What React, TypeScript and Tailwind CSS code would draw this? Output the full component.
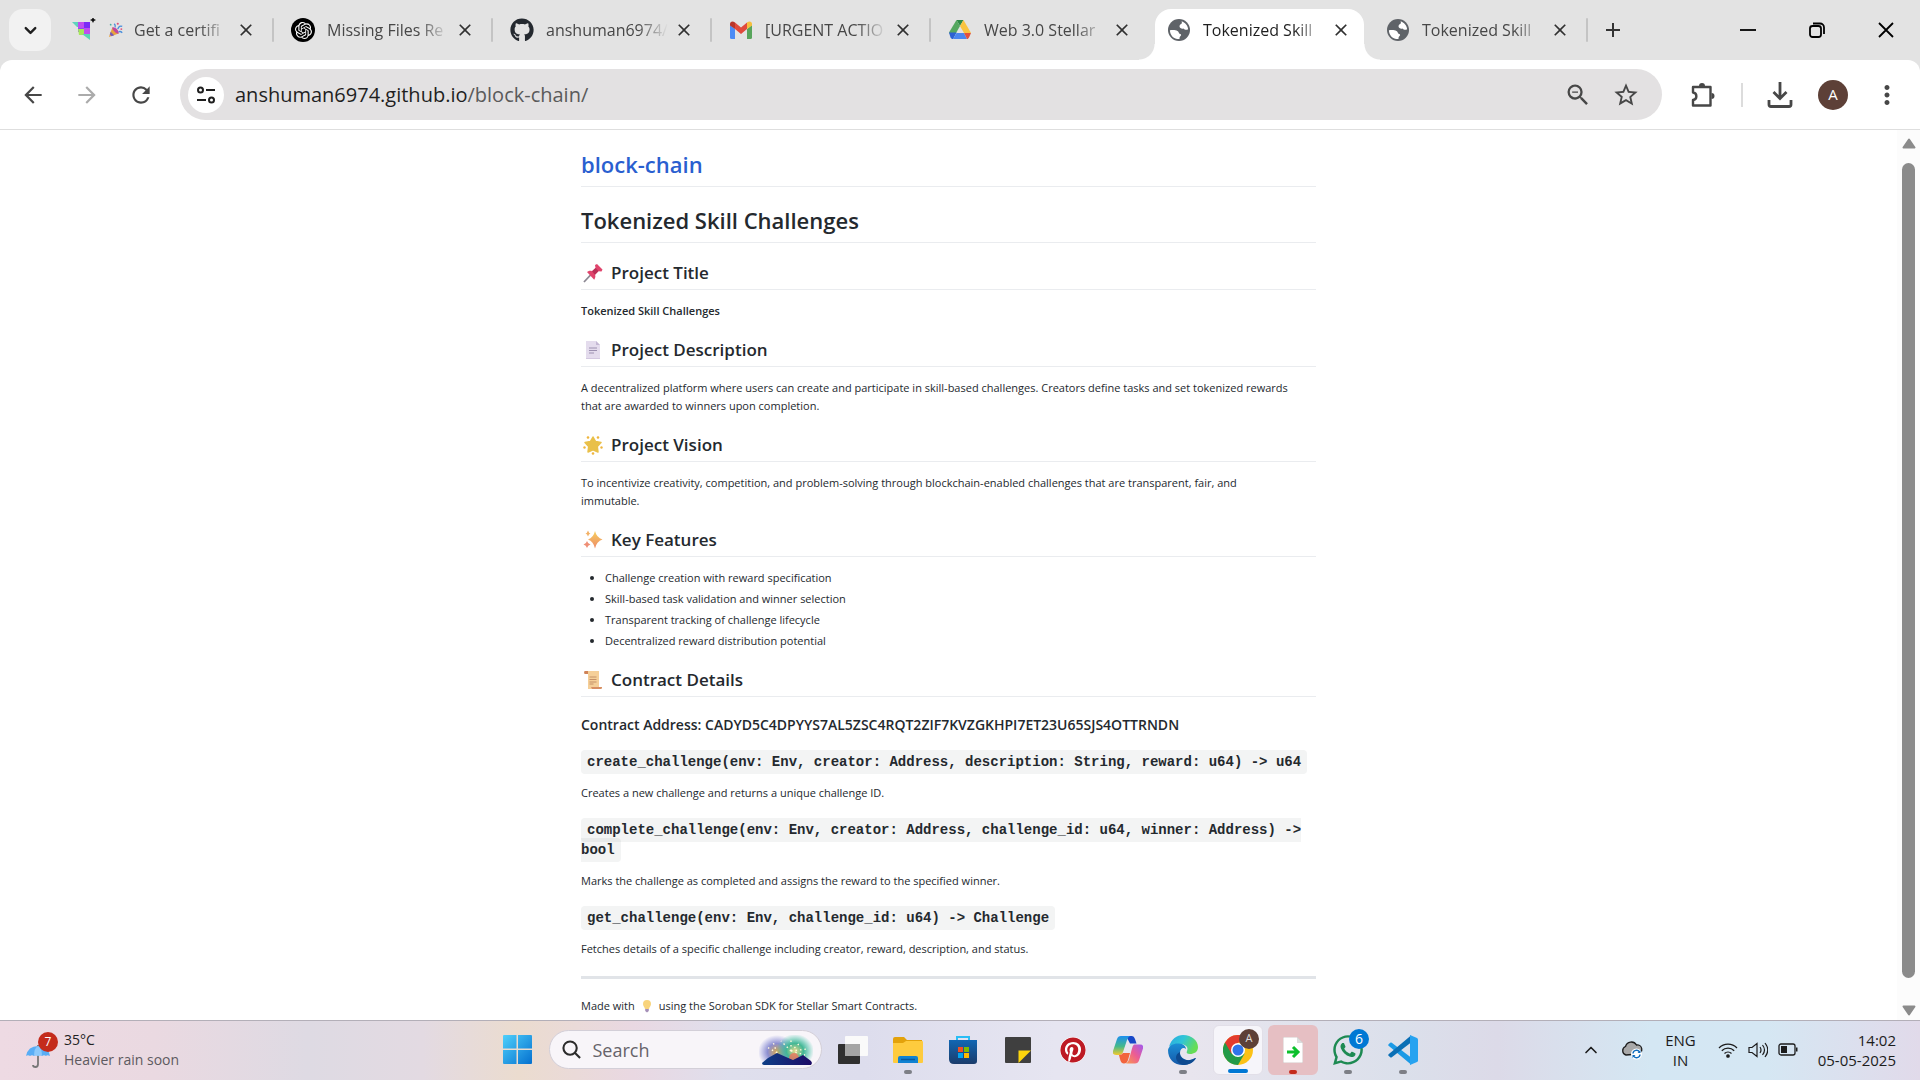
import React from "react";
import { FaGithub, FaWhatsapp, FaPinterest } from "react-icons/fa";
import { SiOpenai } from "react-icons/si";
import {
  MdArrowBack,
  MdArrowForward,
  MdRefresh,
  MdStarBorder,
  MdOutlineZoomOut,
  MdMoreVert,
  MdClose,
  MdAdd,
} from "react-icons/md";
import { ChevronDown, ChevronUp } from "lucide-react";

/* ---------- Tab favicons ---------- */

const CourseIcon = () => (
  <svg viewBox="0 0 24 24" className="size-6">
    <path d="M0 4h6v5H5z" fill="#5fd3bc" />
    <path d="M6 4h6v6H6z" fill="#c04df0" />
    <path d="M12 4h6v6h-6z" fill="#7a2cf5" />
    <path d="M6 10h6v4H6z" fill="#8e4ff2" />
    <path d="M6 11h6v6H7z" fill="#a6e85a" />
    <path d="M12 10h6v6h-6z" fill="#c04df0" />
    <path d="M10 16h8v6z" fill="#58d8b4" />
    <path d="M21-1l1 2 2 1-2 1-1 2-1-2-2-1 2-1z" fill="#111" />
  </svg>
);

const PartyIcon = () => (
  <svg viewBox="0 0 18 18" className="size-4 shrink-0">
    <path d="M1 17L5 6l7 7z" fill="#e8a33c" />
    <path d="M3 11l4 4-3 1-2-2z" fill="#7a5bb5" />
    <path d="M5 6c3-1 8 4 7 7-2 1-8-4-7-7z" fill="#c0479c" />
    <path d="M8 6c1-2 0-3-1-4M11 8c1-3 3-4 5-3M12 11c2-1 3 0 4 1" stroke="#4b8fdc" strokeWidth="1.6" fill="none" />
    <circle cx="11" cy="2" r="1.2" fill="#e0517a" />
    <circle cx="15" cy="8" r="1.1" fill="#e0517a" />
    <circle cx="3" cy="3" r="1" fill="#49b0a0" />
  </svg>
);

const OpenAiIcon = () => (
  <span className="flex size-6 items-center justify-center rounded-full bg-black text-white">
    <SiOpenai size={17} />
  </span>
);

const GmailIcon = () => (
  <svg viewBox="0 0 24 24" className="size-6">
    <path d="M1 7l5 4v10H2.500a1.500 1.500 0 0 1-1.500-1.500z" fill="#4c8bf5" />
    <path d="M18 11l5-4v12.500a1.500 1.500 0 0 1-1.500 1.500H18z" fill="#58a55c" />
    <path d="M6 4.500l6 5 6-5V11l-6 5-6-5z" fill="#e04a3c" />
    <path d="M1 6c0-2.500 2.500-3.500 5-1.500V11L1 7.500z" fill="#b8352b" />
    <path d="M23 6c0-2.500-2.500-3.500-5-1.500V11l5-3.500z" fill="#f6bf3e" />
  </svg>
);

const DriveIcon = () => (
  <svg viewBox="0 0 24 24" className="size-6">
    <path d="M8.500 2h7L12 8z" fill="#2f8a46" />
    <path d="M8.500 2L12 8 5 20.500 1 14.500z" fill="#55a860" />
    <path d="M15.500 2L23 15h-7L12 8z" fill="#f9c440" />
    <path d="M1 14.500h7.500L5 21c-1.500 0-2-.7-2.500-1.500z" fill="#2c61d4" />
    <path d="M8.500 15H16l3 6H5z" fill="#4a86f0" />
    <path d="M16 15h7l-2 4.500c-.5.900-1 1.500-2 1.500z" fill="#e2513e" />
  </svg>
);

const GlobeIcon = () => (
  <svg viewBox="0 0 24 24" className="size-6">
    <circle cx="12" cy="12" r="11" fill="#5f6368" />
    <path d="M14.500 3.300c3.500 1 6.300 4.200 6.600 8-1.600.9-3.600.6-4.600-.8-1.500.6-4-.2-4-2.300 0-1.300 1-1.700 1.700-2.200.8-.6.900-1.700.3-2.700z" fill="#fff" />
    <path d="M2.900 12.200c2.500-.2 5.700-.4 7.600.7 1.700 1 1 2.800 2.600 3 1.400.2 1.200 1.500.4 2.200-.9.800-1 1.800-1 3C7 21.300 3 17.500 2.900 12.200z" fill="#fff" />
  </svg>
);

type TabInfo = { icon: React.ReactNode; title: string; lead?: React.ReactNode; active?: boolean; sep?: boolean };

const tabs: TabInfo[] = [
  { icon: <CourseIcon />, title: "Get a certifi", lead: <PartyIcon />, sep: true },
  { icon: <OpenAiIcon />, title: "Missing Files Re", sep: true },
  { icon: <FaGithub size={24} className="text-[#24292f]" />, title: "anshuman6974/", sep: true },
  { icon: <GmailIcon />, title: "[URGENT ACTIO", sep: true },
  { icon: <DriveIcon />, title: "Web 3.0 Stellar" },
  { icon: <GlobeIcon />, title: "Tokenized Skill", active: true },
  { icon: <GlobeIcon />, title: "Tokenized Skill", sep: true },
];

function Tab({ icon, title, lead, active, sep }: TabInfo) {
  return (
    <div className="relative flex h-full w-[219px] min-w-0 items-center pr-4 pl-[17px]">
      {active && (
        <div className="absolute inset-x-[5px] top-[9px] bottom-0 rounded-t-2xl bg-white">
          <span className="absolute bottom-0 -left-4 size-4 bg-[radial-gradient(circle_at_top_left,#e3e3e3_15px,#ffffff_16px)]" />
          <span className="absolute -right-4 bottom-0 size-4 bg-[radial-gradient(circle_at_top_right,#e3e3e3_15px,#ffffff_16px)]" />
        </div>
      )}
      <span className="relative flex size-6 shrink-0 items-center justify-center">{icon}</span>
      <span
        className={
          "relative ml-3 flex min-w-0 flex-1 items-center gap-2.5 text-base whitespace-nowrap [mask-image:linear-gradient(to_right,black_75%,transparent)] " +
          (active ? "text-[#1f1f1f]" : "text-[#474747]")
        }
      >
        {lead}
        {title}
      </span>
      <button aria-label="Close tab" className="relative ml-1 flex size-6 shrink-0 items-center justify-center text-[#303030]">
        <MdClose size={20} />
      </button>
      {sep && <span className="absolute right-0 h-6 w-0.5 rounded-full bg-[#c4c4c4]" />}
    </div>
  );
}

function TabStrip() {
  return (
    <header className="flex h-[60px] shrink-0 items-center bg-[#e3e3e3]">
      <button aria-label="Search tabs" className="mr-1 ml-[9px] flex size-[42px] shrink-0 items-center justify-center rounded-[14px] bg-[#f2f2f2] text-[#1f1f1f]">
        <ChevronDown size={19} strokeWidth={3} />
      </button>
      <nav className="flex h-full min-w-0">
        {tabs.map((t, i) => (
          <Tab key={i} {...t} />
        ))}
      </nav>
      <button aria-label="New tab" className="ml-[11px] flex size-7 items-center justify-center text-[#333]">
        <MdAdd size={24} />
      </button>
      <div className="ml-auto flex text-black">
        <button aria-label="Minimize" className="flex h-10 w-[69px] items-center justify-center">
          <svg viewBox="0 0 16 16" className="size-4"><path d="M0 8h16" stroke="currentColor" strokeWidth="1.800" /></svg>
        </button>
        <button aria-label="Restore" className="flex h-10 w-[69px] items-center justify-center">
          <svg viewBox="0 0 16 16" className="size-4" fill="none" stroke="currentColor" strokeWidth="1.800">
            <rect x="1" y="4" width="11" height="11" rx="2.500" />
            <path d="M4 1.500h7a4 4 0 0 1 4 4v6.500" />
          </svg>
        </button>
        <button aria-label="Close" className="flex h-10 w-[69px] items-center justify-center">
          <svg viewBox="0 0 16 16" className="size-4"><path d="M1 1l14 14M15 1L1 15" stroke="currentColor" strokeWidth="1.800" /></svg>
        </button>
      </div>
    </header>
  );
}

function Toolbar() {
  return (
    <div className="shrink-0 bg-[#e3e3e3]">
      <div className="flex h-[70px] items-center rounded-t-xl border-b border-[#dedede] bg-white text-[#474747]">
        <div className="flex w-[180px] shrink-0 items-center pl-5">
          <button aria-label="Back" className="mr-7"><MdArrowBack size={26} /></button>
          <button aria-label="Forward" className="mr-7 text-[#ababab]"><MdArrowForward size={26} /></button>
          <button aria-label="Reload"><MdRefresh size={26} /></button>
        </div>
        <div className="flex h-[51px] min-w-0 flex-1 items-center rounded-full bg-[#e3e1e2] pr-[22px] pl-2">
          <button aria-label="View site information" className="flex size-9 shrink-0 items-center justify-center rounded-full bg-white text-[#1f1f1f]">
            <svg viewBox="0 0 20 20" className="size-5" fill="none" stroke="currentColor" strokeWidth="2">
              <circle cx="4.500" cy="5" r="2.500" />
              <path d="M10 5h9M1 15h9" />
              <circle cx="15.500" cy="15" r="2.500" />
            </svg>
          </button>
          <p className="ml-[11px] flex-1 text-xl whitespace-nowrap text-[#5a5a5a]">
            <span className="text-[#1f1f1f]">anshuman6974.github.io</span>/block-chain/
          </p>
          <button aria-label="Zoom"><MdOutlineZoomOut size={28} /></button>
          <button aria-label="Bookmark this tab" className="ml-5"><MdStarBorder size={28} /></button>
        </div>
        <div className="flex w-[258px] shrink-0 items-center pl-[27px]">
          <button aria-label="Extensions">
            <svg viewBox="0 0 28 28" className="size-7" fill="none" stroke="currentColor" strokeWidth="2.400" strokeLinejoin="round">
              <path d="M4 6h17.500v18.500H4v-5.500c4.500-.5 4.500-7 0-7.500z" />
              <path d="M10 5a3 3 0 0 1 6 0zM22.500 12a3 3 0 0 1 0 6z" fill="currentColor" stroke="none" />
            </svg>
          </button>
          <span className="ml-6 h-6 w-0.5 bg-[#dcdcdc]" />
          <button aria-label="Downloads" className="ml-6">
            <svg viewBox="0 0 26 28" className="h-7 w-[26px]" fill="none" stroke="currentColor" strokeWidth="2.800">
              <path d="M13 1v16M6.500 11l6.500 6.500 6.500-6.500M2 19v4.500a2 2 0 0 0 2 2h18a2 2 0 0 0 2-2V19" />
            </svg>
          </button>
          <button aria-label="Profile" className="ml-[25px] flex size-[30px] items-center justify-center rounded-full bg-[#5d4037] text-[15px] text-white">A</button>
          <button aria-label="Menu" className="ml-6"><MdMoreVert size={30} /></button>
        </div>
      </div>
    </div>
  );
}

/* ---------- Page heading pictograms ---------- */

const PinIcon = () => (
  <svg viewBox="0 0 20 20" className="size-5">
    <path d="M1 19L8 11.500" stroke="#8b8792" strokeWidth="1.800" />
    <path d="M4 9c2-1.500 4-1.500 5-.8L12.500 5 12 2l2-1 5.500 5.500-1 2-3-.3-3.500 3.500c.7 1.300.5 3-.8 5z" fill="#e0446c" />
    <path d="M9 8.200L12.500 5l3 3-3.500 3.700z" fill="#b92f56" />
  </svg>
);
const PageIcon = () => (
  <svg viewBox="0 0 20 20" className="size-5">
    <path d="M3 1h10l4 4v14H3z" fill="#e4dced" />
    <path d="M13 1l4 4h-4z" fill="#c4b8d4" />
    <path d="M6 8h8M6 10.500h8M6 13h5" stroke="#9c90b0" strokeWidth="1" />
    <path d="M3 18h14v1H3z" fill="#d3c8e0" />
  </svg>
);
const StarIcon = () => (
  <svg viewBox="0 0 20 20" className="size-5">
    <path d="M10 2l2.600 4.600 5.400 1-3.700 4 .7 5.400-5-2.300L5 17l.7-5.400-3.700-4 5.400-1z" fill="#e9c04a" stroke="#e9c04a" strokeWidth="1.500" strokeLinejoin="round" />
    <g fill="#efb53c">
      <circle cx="5" cy="2.500" r="1.300" /><circle cx="15" cy="2.500" r="1.300" /><circle cx="1.500" cy="12.500" r="1.200" />
      <circle cx="18.500" cy="12.500" r="1.200" /><circle cx="10" cy="18.500" r="1.300" />
    </g>
  </svg>
);
const SparkleIcon = () => (
  <svg viewBox="0 0 20 20" className="size-5">
    <defs>
      <linearGradient id="spark" x1="0" y1="0" x2="0" y2="1"><stop offset="0" stopColor="#f6cf5c" /><stop offset="1" stopColor="#ee8a6a" /></linearGradient>
    </defs>
    <path d="M12 1q1.500 6.500 7.500 8.500Q13.500 11.500 12 18.500 10.500 11.500 5 9.500 10.500 7.500 12 1z" fill="url(#spark)" />
    <path d="M5 .500q.7 2.500 2.500 3Q5.700 4 5 6.500 4.300 4 2.500 3.500 4.300 3 5 .5z" fill="#f3b166" />
    <path d="M4 11q.8 3 3.500 3.500Q4.800 15 4 18 3.200 15 .5 14.500 3.200 14 4 11z" fill="#ef8f76" />
  </svg>
);
const ScrollIcon = () => (
  <svg viewBox="0 0 20 20" className="size-5">
    <path d="M4 1h12v16l3 .5-1 1.500H5V3z" fill="#f5cf98" />
    <path d="M1 2c0-1 1-1 2-1h2v3H1.500z" fill="#cf8358" />
    <path d="M8 17h11c0 1.500-.5 2-1.500 2H9z" fill="#d78f63" />
    <path d="M6.500 7h7M6.500 9.500h7M6.500 12h7M6.500 14h4" stroke="#c08a62" strokeWidth=".9" />
  </svg>
);
const BulbIcon = () => (
  <svg viewBox="0 0 12 14" className="h-3.5 w-3">
    <path d="M6 1a4 4 0 0 1 4 4c0 2-1.500 2.700-2 5H4C3.500 7.700 2 7 2 5a4 4 0 0 1 4-4z" fill="#f8d47d" />
    <path d="M4.200 10h3.600v2L6 13.500 4.200 12z" fill="#a58fb8" />
  </svg>
);

function H2({ icon, children }: { icon: React.ReactNode; children: React.ReactNode }) {
  return (
    <h2 className="mt-[18px] flex items-center border-b border-[#eaecef] pb-[5px] pl-0.5 text-[17px] leading-[23px] font-semibold">
      <span className="mr-2">{icon}</span>
      {children}
    </h2>
  );
}

function Code({ children }: { children: React.ReactNode }) {
  return (
    <h3 className="mt-[18px] font-['Liberation_Mono',monospace] text-sm leading-5 font-bold">
      <code className="rounded bg-[#1b1f23]/5 px-1.5 py-1 font-['Liberation_Mono',monospace]">{children}</code>
    </h3>
  );
}

const P = ({ children }: { children: React.ReactNode }) => <p className="mt-3">{children}</p>;

function Page() {
  return (
    <div className="flex min-h-0 flex-1 bg-white">
      <main className="min-w-0 flex-1 overflow-hidden pt-[19px]">
        <article className="mx-auto w-full max-w-[735px] text-[11px] leading-[18px] text-[#24292e]">
          <h1 className="border-b border-[#eaecef] pb-[7px] text-[22px] leading-[30px] font-semibold">
            <a href="#home" className="text-[#2a5fd0]">block-chain</a>
          </h1>
          <h1 className="mt-[18px] border-b border-[#eaecef] pb-[7px] text-[22px] leading-[30px] font-semibold">Tokenized Skill Challenges</h1>

          <H2 icon={<PinIcon />}>Project Title</H2>
          <p className="mt-3 font-semibold">Tokenized Skill Challenges</p>

          <H2 icon={<PageIcon />}>Project Description</H2>
          <P>
            A decentralized platform where users can create and participate in skill-based challenges. Creators define tasks and set tokenized rewards
            <br />
            that are awarded to winners upon completion.
          </P>

          <H2 icon={<StarIcon />}>Project Vision</H2>
          <P>
            To incentivize creativity, competition, and problem-solving through blockchain-enabled challenges that are transparent, fair, and
            <br />
            immutable.
          </P>

          <H2 icon={<SparkleIcon />}>Key Features</H2>
          <ul className="mt-3 list-disc space-y-[3px] pl-6">
            <li>Challenge creation with reward specification</li>
            <li>Skill-based task validation and winner selection</li>
            <li>Transparent tracking of challenge lifecycle</li>
            <li>Decentralized reward distribution potential</li>
          </ul>

          <H2 icon={<ScrollIcon />}>Contract Details</H2>
          <h3 className="mt-[18px] text-sm leading-[19px] font-semibold">
            Contract Address: CADYD5C4DPYYS7AL5ZSC4RQT2ZIF7KVZGKHPI7ET23U65SJS4OTTRNDN
          </h3>

          <Code>create_challenge(env: Env, creator: Address, description: String, reward: u64) -&gt; u64</Code>
          <P>Creates a new challenge and returns a unique challenge ID.</P>

          <Code>complete_challenge(env: Env, creator: Address, challenge_id: u64, winner: Address) -&gt; bool</Code>
          <P>Marks the challenge as completed and assigns the reward to the specified winner.</P>

          <Code>get_challenge(env: Env, challenge_id: u64) -&gt; Challenge</Code>
          <P>Fetches details of a specific challenge including creator, reward, description, and status.</P>

          <hr className="my-[18px] h-[3px] border-0 bg-[#e1e4e8]" />
          <p className="flex items-center gap-1.5">
            Made with <BulbIcon /> using the Soroban SDK for Stellar Smart Contracts.
          </p>
        </article>
      </main>
      <div className="flex w-[23px] shrink-0 flex-col items-center bg-[#fcfcfc] pt-2 pb-1 text-[#8b8b8b]">
        <svg viewBox="0 0 14 11" className="h-[11px] w-3.5"><path d="M7 1.500L12.500 9.500h-11z" fill="currentColor" stroke="currentColor" strokeWidth="2" strokeLinejoin="round" /></svg>
        <span className="mt-3.5 mb-[27px] w-[13px] flex-1 rounded-full bg-[#8b8b8b]" />
        <svg viewBox="0 0 14 11" className="h-[11px] w-3.5"><path d="M7 9.500L12.500 1.500h-11z" fill="currentColor" stroke="currentColor" strokeWidth="2" strokeLinejoin="round" /></svg>
      </div>
    </div>
  );
}

/* ---------- Taskbar ---------- */

const WindowsIcon = () => (
  <svg viewBox="0 0 29 29" className="size-[29px]">
    <defs>
      <linearGradient id="win" gradientUnits="userSpaceOnUse" x1="0" y1="0" x2="29" y2="29"><stop offset="0" stopColor="#4fd0fb" /><stop offset="1" stopColor="#0470cf" /></linearGradient>
    </defs>
    <path d="M0 1q0-1 1-1h12.500v13.500H0zM15 0h13q1 0 1 1v12.500H15zM0 15h13.500v14H1q-1 0-1-1zM15 15h14v13q0 1-1 1H15z" fill="url(#win)" />
  </svg>
);

const FireworksIcon = () => (
  <svg viewBox="0 0 54 30" className="h-[30px] w-[54px]">
    <defs>
      <radialGradient id="fwA"><stop offset="0" stopColor="#d8a84e" /><stop offset=".5" stopColor="#8d8fd0" /><stop offset="1" stopColor="#8f95dd" stopOpacity="0" /></radialGradient>
      <radialGradient id="fwB"><stop offset="0" stopColor="#e8dc8a" /><stop offset=".45" stopColor="#43b795" /><stop offset="1" stopColor="#38c3a8" stopOpacity="0" /></radialGradient>
      <linearGradient id="fwC" x1="0" x2="1"><stop offset="0" stopColor="#0f3f86" /><stop offset="1" stopColor="#1d0b66" /></linearGradient>
    </defs>
    <ellipse cx="18" cy="17" rx="19" ry="17" fill="url(#fwA)" />
    <ellipse cx="36" cy="16" rx="19" ry="17" fill="url(#fwB)" />
    <circle cx="35" cy="23" r="5" fill="#f0745c" opacity=".8" />
    <g stroke="#fff8dc" strokeWidth="1.400" strokeDasharray="1.500 3">
      <path d="M32 16L22 6M32 16V5M32 16L42 7M32 16L48 14M32 16L46 20M18 18L8 12M18 18L14 7" />
    </g>
    <path d="M3 28l6-5 9-5 9 4 7 3 10-5 8 6 1 2-1 2H5q-2 0-2-2z" fill="url(#fwC)" />
  </svg>
);

const TaskViewIcon = () => (
  <svg viewBox="0 0 30 30" className="size-[30px]">
    <rect x="0" y="9" width="22" height="20" rx="1" fill="#303030" />
    <rect x="7" y="1" width="23" height="20" rx="1" fill="#fafafa" />
    <rect x="7" y="9" width="15" height="12" fill="#a5a5a5" />
  </svg>
);

const ExplorerIcon = () => (
  <svg viewBox="0 0 30 28" className="h-7 w-[30px]">
    <path d="M0 3q0-2 2-2h9l3 3h15v6H0z" fill="#e3a20b" />
    <path d="M0 7h10l3-2h16q1 0 1 1v20q0 1-1 1H1q-1 0-1-1z" fill="#fecb3e" />
    <path d="M5 27v-5q0-2 2-2h16q2 0 2 2v5z" fill="#1182d2" />
    <path d="M8 23.500h14" stroke="#0b589c" strokeWidth="1.500" />
  </svg>
);

const StoreIcon = () => (
  <svg viewBox="0 0 30 30" className="size-[30px]">
    <defs>
      <linearGradient id="store" x1="0" y1="0" x2="0" y2="1"><stop offset="0" stopColor="#1267b4" /><stop offset="1" stopColor="#1b3c6b" /></linearGradient>
    </defs>
    <path d="M9 7V2h12v5" fill="none" stroke="#29bdf5" strokeWidth="2" />
    <path d="M1 5h28v21q0 3-3 3H6q-5 0-5-5z" fill="url(#store)" />
    <path d="M10 12h5v5h-5z" fill="#f25022" /><path d="M16 12h5v5h-5z" fill="#7fba00" />
    <path d="M10 18h5v5h-5z" fill="#00a4ef" /><path d="M16 18h5v5h-5z" fill="#ffb900" />
  </svg>
);

const NotesIcon = () => (
  <svg viewBox="0 0 26 26" className="size-[26px]">
    <rect width="26" height="26" rx="1" fill="#3f3f3f" />
    <path d="M13.500 13.500H26L13.500 26z" fill="#fdd60d" />
  </svg>
);

const CopilotIcon = () => (
  <svg viewBox="0 0 30 28" className="h-7 w-[30px]">
    <defs>
      <linearGradient id="cpA" x1="0" y1="0" x2="0" y2="1"><stop offset="0" stopColor="#1c8ff0" /><stop offset=".55" stopColor="#45b98a" /><stop offset="1" stopColor="#f4c92c" /></linearGradient>
      <linearGradient id="cpB" x1="1" y1="0" x2="0" y2="1"><stop offset="0" stopColor="#a05af0" /><stop offset=".5" stopColor="#ec5c93" /><stop offset="1" stopColor="#fb9a4c" /></linearGradient>
    </defs>
    <path d="M13 0h6q2 0 3 3l1.500 4.500H17z" fill="#1747c8" />
    <path d="M8 0h9q-2 1-3 4l-4 12q-1 3-4 3H3q-4 0-3-4L4 3q1-3 4-3z" fill="url(#cpA)" />
    <path d="M21 8.500h6q4 0 3 4l-4 12q-1 3-4 3h-9q2-1 3-4l3-11q.7-3 2-4z" fill="url(#cpB)" />
    <path d="M6 19q3 0 4-2h7l-2 7q-1 3.500-4 3.500-3 0-4-4.500z" fill="#f2643d" />
  </svg>
);

const EdgeIcon = () => (
  <svg viewBox="0 0 30 30" className="size-[30px]">
    <defs>
      <linearGradient id="edA" x1="0" x2="1" y2=".4"><stop offset="0" stopColor="#2aa8e0" /><stop offset=".5" stopColor="#30c5d8" /><stop offset="1" stopColor="#66dd55" /></linearGradient>
      <linearGradient id="edB" x1="0" y1="0" x2="0" y2="1"><stop offset="0" stopColor="#1b8fd6" /><stop offset="1" stopColor="#1558a8" /></linearGradient>
    </defs>
    <path d="M1 12C3 4 9 0 15 0c9 0 15 6 15 12 0 5-4 7-8 7-3 0-4-1-3-3 2-4-2-7-7-7-6 0-10 2-11 3z" fill="url(#edA)" />
    <path d="M0 15C1 10 6 8 11 8.500c4 .3 7 2.500 7 5.500-2-2-6-1-6 4 0 4 5 8 10 7 3-.5 5-2 6-2-3 5-8 7-13 7C6 30 0 24 0 15z" fill="url(#edB)" />
    <path d="M12 17c-1 6 5 9 10 8 3-.5 5-2 6-2-2 4-7 7-12 7C8 29 5 20 12 17z" fill="#0e4a90" />
  </svg>
);

const ChromeIcon = () => (
  <svg viewBox="0 0 30 30" className="size-[30px]">
    <circle cx="15" cy="15" r="15" fill="#fbc116" />
    <path d="M2 7.500A15 15 0 0 0 15 30l6.500-11.200L15 15z" fill="#229a48" />
    <path d="M2 7.500A15 15 0 0 1 28 7.500H15v7.500l-6.500 3.800z" fill="#e33b2e" />
    <circle cx="15" cy="15" r="7" fill="#fff" />
    <circle cx="15" cy="15" r="5.500" fill="#2f74ea" />
  </svg>
);

const TransferIcon = () => (
  <svg viewBox="0 0 20 26" className="h-[26px] w-5">
    <path d="M0 0h14l6 6v20H0z" fill="#fff" stroke="#c9b9b9" strokeWidth=".8" />
    <path d="M14 0l6 6h-6z" fill="#dcdcdc" />
    <path d="M4 15h9M10 10l5 5-5 5" stroke="#0cc02c" strokeWidth="3" fill="none" />
  </svg>
);

const CodeIcon = () => (
  <svg viewBox="0 0 30 30" className="size-[30px]">
    <path d="M.6 10.800q-.8-.8 0-1.600l1.600-1.400q.8-.6 1.600 0L23 22.500v7z" fill="#1b9ae6" />
    <path d="M.6 19.200q-.8.800 0 1.600l1.600 1.400q.8.600 1.600 0L23 7.500V.5z" fill="#0a6fb5" />
    <path d="M22 0l7 3q1 .5 1 1.500v21q0 1-1 1.500l-7 3z" fill="#27a3f0" />
  </svg>
);

const Indicator = ({ tone }: { tone: string }) => <span className={"absolute bottom-px h-1 rounded-full " + tone} />;

function TaskButton({ label, children, box, mark }: { label: string; children: React.ReactNode; box?: string; mark?: string }) {
  return (
    <button aria-label={label} className="flex w-[55px] justify-center">
      <span className={"relative flex h-[50px] w-[50px] items-center justify-center rounded-md " + (box ?? "")}>
        {children}
        {mark && <Indicator tone={mark} />}
      </span>
    </button>
  );
}

const gray = "w-2 bg-[#7d7f86]";

function Taskbar() {
  return (
    <footer className="grid h-[60px] shrink-0 grid-cols-[1fr_auto_1fr] items-center border-t border-[#b3afb8] bg-[linear-gradient(90deg,#eedae3_0%,#ead9e1_8%,#dedae3_16%,#e3dae2_22%,#ebdccf_27%,#e9d8e2_33%,#dfdfed_38%,#dddded_45%,#e6e5f1_55%,#e8e5ee_62%,#dbe0eb_73%,#dcdae8_78%,#d4e7f3_86%,#d5e7f3_92%,#e1daea_100%)] pb-0.5">
      <button className="flex items-center pl-[26px] text-left text-[#222]">
        <span className="relative h-9 w-8">
          <svg viewBox="0 0 24 24" className="absolute bottom-0 left-0 size-6">
            <path d="M12 1v19q0 3-2.500 3T7 21" fill="none" stroke="#777" strokeWidth="1.800" />
            <path d="M0 12Q2 2 12 2t12 10q-3-1.500-4 0-2-1.500-4 0-2-1.500-4 0-2-1.500-4 0-2-1.500-4 0-2-1.500-4 0z" fill="#58adf5" />
            <path d="M8 12q0-8 4-10 4 2 4 10-2-1.500-4 0-2-1.500-4 0z" fill="#8bc9fb" />
          </svg>
          <span className="absolute top-0 right-0 flex size-5 items-center justify-center rounded-full bg-[#c42b1c] text-xs text-white">7</span>
        </span>
        <span className="ml-1.5 text-sm leading-5">
          35°C
          <span className="block text-[#5d5a60]">Heavier rain soon</span>
        </span>
      </button>

      <div className="flex items-center">
        <button aria-label="Start" className="mr-1 flex w-[55px] justify-center"><WindowsIcon /></button>
        <label className="mr-1 flex h-[39px] w-[273px] items-center rounded-full border border-[#d3cfd8] bg-[#f8f5f9] pr-2 pl-3">
          <svg viewBox="0 0 20 20" className="size-[19px] shrink-0" fill="none" stroke="#2b2b2b" strokeWidth="2.200"><circle cx="8.500" cy="8.500" r="7" /><path d="M13.500 13.500L19 19" /></svg>
          <input type="text" aria-label="Search" placeholder="Search" className="ml-3 w-0 flex-1 bg-transparent text-lg text-[#333] outline-none placeholder:text-[#66636a]" />
          <FireworksIcon />
        </label>
        <TaskButton label="Task view"><TaskViewIcon /></TaskButton>
        <TaskButton label="File Explorer" mark={gray}><ExplorerIcon /></TaskButton>
        <TaskButton label="Microsoft Store"><StoreIcon /></TaskButton>
        <TaskButton label="Sticky Notes"><NotesIcon /></TaskButton>
        <TaskButton label="Pinterest"><FaPinterest size={26} className="rounded-full bg-white text-[#bd1a24]" /></TaskButton>
        <TaskButton label="Copilot"><CopilotIcon /></TaskButton>
        <TaskButton label="Edge" mark={gray}><EdgeIcon /></TaskButton>
        <TaskButton label="Chrome" box="border border-[#e2dfe8] bg-[#f6f5fa]" mark="w-5 bg-[#0078d4]">
          <ChromeIcon />
          <span className="absolute top-[3px] right-[3px] flex size-5 items-center justify-center rounded-full bg-[#5d4037] text-[11px] text-[#ddd]">A</span>
        </TaskButton>
        <TaskButton label="File transfer" box="bg-[#e6bfc3]" mark="w-2 bg-[#c42b1c]"><TransferIcon /></TaskButton>
        <TaskButton label="WhatsApp" mark={gray}>
          <FaWhatsapp size={34} className="text-[#1d8a52]" />
          <span className="absolute top-1 right-1 flex size-5 items-center justify-center rounded-full bg-[#0078d4] text-sm text-white">6</span>
        </TaskButton>
        <TaskButton label="Visual Studio Code" mark={gray}><CodeIcon /></TaskButton>
      </div>

      <div className="flex items-center justify-end pr-6 text-[15px] leading-5 text-[#1c1c1c]">
        <button aria-label="Show hidden icons" className="mr-5"><ChevronUp size={20} strokeWidth={2} /></button>
        <button aria-label="OneDrive" className="mr-[22px]">
          <svg viewBox="0 0 22 20" className="h-5 w-[22px]">
            <path d="M5 15a4.500 4.500 0 0 1-.5-8.500A6 6 0 0 1 15.500 5 4.500 4.500 0 0 1 17 14z" fill="#a8a8a8" stroke="#1c1c1c" strokeWidth="1.300" />
            <circle cx="15.500" cy="14" r="5.500" fill="#fff" />
            <path d="M12 13.500a3.500 3.500 0 0 1 6.500-1.500M19 14.500a3.500 3.500 0 0 1-6.500 1.500" fill="none" stroke="#0f6cbd" strokeWidth="1.400" />
            <path d="M19.500 10v3h-3zM11.500 18v-3h3z" fill="#0f6cbd" />
          </svg>
        </button>
        <button className="mr-[22px] text-center">ENG<br />IN</button>
        <button aria-label="Network, volume and battery" className="mr-5 flex items-center gap-2.5">
          <svg viewBox="0 0 20 16" className="h-4 w-5" fill="none" stroke="currentColor" strokeWidth="1.300">
            <path d="M1 6a12.500 12.500 0 0 1 18 0M3.800 8.800a8.700 8.700 0 0 1 12.400 0M6.500 11.500a5 5 0 0 1 7 0" />
            <circle cx="10" cy="14" r="1.200" fill="currentColor" />
          </svg>
          <svg viewBox="0 0 20 16" className="h-4 w-5" fill="none" stroke="currentColor" strokeWidth="1.200">
            <path d="M1 5.500h3L9 1.500v13l-5-4H1zM12 5q2 3 0 6M14.500 3q4 5 0 10M17 1q5.500 7 0 14" />
          </svg>
          <svg viewBox="0 0 20 14" className="h-3.5 w-5" fill="none" stroke="currentColor" strokeWidth="1.300">
            <rect x="1" y="1" width="16" height="11" rx="2" />
            <path d="M3 3h6v7H3zM18 4.500h1.500v4H18z" fill="currentColor" stroke="none" />
          </svg>
        </button>
        <button className="text-right whitespace-nowrap">14:02<br />05-05-2025</button>
      </div>
    </footer>
  );
}

export default function App() {
  return (
    <div className="flex h-screen flex-col overflow-hidden font-['Open_Sans','Noto_Sans',sans-serif]">
      <TabStrip />
      <Toolbar />
      <Page />
      <Taskbar />
    </div>
  );
}
